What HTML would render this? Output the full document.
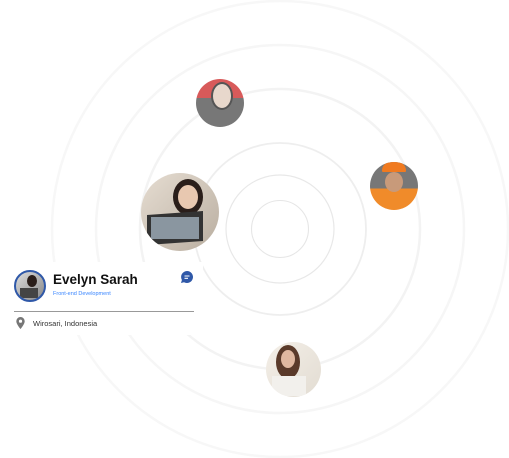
<!DOCTYPE html>
<html><head><style>
body{margin:0;width:509px;height:458px;overflow:hidden;background:#fff;font-family:"Liberation Sans",sans-serif;position:relative}
.av{position:absolute;border-radius:50%;overflow:hidden}
.card{position:absolute;left:0;top:262px;width:203px;height:73px;background:#fff}
</style></head><body>
<svg width="509" height="458" style="position:absolute;left:0;top:0">
<g fill="none">
<circle cx="280" cy="229" r="28.5" stroke="#e6e6e6" stroke-width="1.1"/>
<circle cx="280" cy="229" r="54" stroke="#e8e8e8" stroke-width="1.2"/>
<circle cx="280" cy="229" r="86" stroke="#eeeeee" stroke-width="1.8"/>
<circle cx="280" cy="229" r="140" stroke="#f3f3f3" stroke-width="2.5"/>
<circle cx="280" cy="229" r="184" stroke="#f6f6f6" stroke-width="2.5"/>
<circle cx="280" cy="229" r="228" stroke="#f7f7f7" stroke-width="2.5"/>
</g>
</svg>
<div class="av" style="left:196px;top:79px;width:48px;height:48px;background:linear-gradient(#d85a5a 0 40%,#777 40%)">
<div style="position:absolute;left:15px;top:3px;width:18px;height:24px;border-radius:50%;background:#e8d8cc;border:2px solid #555"></div></div>
<div class="av" style="left:370px;top:162px;width:48px;height:48px;background:linear-gradient(#777 0 55%,#f08b2a 55%)">
<div style="position:absolute;left:12px;top:0;width:24px;height:10px;border-radius:12px 12px 2px 2px;background:#f07a20"></div>
<div style="position:absolute;left:15px;top:10px;width:18px;height:20px;border-radius:50%;background:#c89a7a"></div></div>
<div class="av" style="left:141px;top:173px;width:78px;height:78px;background:linear-gradient(135deg,#e6ddd2,#b9aea0)">
<div style="position:absolute;left:32px;top:6px;width:30px;height:36px;border-radius:50%;background:#2a1e1a"></div>
<div style="position:absolute;left:37px;top:12px;width:20px;height:24px;border-radius:50%;background:#e8c8b0"></div>
<div style="position:absolute;left:6px;top:40px;width:56px;height:30px;background:#333;transform:skewY(-4deg)"></div>
<div style="position:absolute;left:10px;top:44px;width:48px;height:22px;background:#8a96a0"></div></div>
<div class="av" style="left:266px;top:342px;width:55px;height:55px;background:linear-gradient(135deg,#f4efe8,#e2dcd2)">
<div style="position:absolute;left:10px;top:3px;width:24px;height:34px;border-radius:50%;background:#5a3a2a"></div>
<div style="position:absolute;left:15px;top:8px;width:14px;height:18px;border-radius:50%;background:#e0b8a0"></div>
<div style="position:absolute;left:6px;top:34px;width:34px;height:20px;background:#f2f0ec"></div></div>
<div class="card">
<div class="av" style="left:14px;top:8px;width:28px;height:28px;border:2px solid #2f58a8;background:linear-gradient(135deg,#ddd,#888)">
<div style="position:absolute;left:11px;top:3px;width:10px;height:12px;border-radius:50%;background:#2a1e1a"></div>
<div style="position:absolute;left:4px;top:16px;width:18px;height:10px;background:#444"></div></div>
<div style="position:absolute;left:53px;top:10px;font-size:13.5px;font-weight:bold;color:#111">Evelyn Sarah</div>
<div style="position:absolute;left:53px;top:29px;font-size:5.5px;color:#3a86ff">Front-end Development</div>
<svg style="position:absolute;left:180px;top:8px" width="14" height="14" viewBox="0 0 14 14"><path d="M7 1a6 6 0 1 1-3 11.2L1 13l.9-3A6 6 0 0 1 7 1z" fill="#2f58a8"/><path d="M4.5 6h5M4.5 8.3h3.5" stroke="#fff" stroke-width="1.1"/></svg>
<div style="position:absolute;left:14px;top:49px;width:180px;height:1px;background:#999"></div>
<svg style="position:absolute;left:16px;top:55px" width="9" height="12" viewBox="0 0 9 12"><path d="M4.5 0a4.2 4.2 0 0 1 4.2 4.2c0 3-4.2 7.8-4.2 7.8S.3 7.2.3 4.2A4.2 4.2 0 0 1 4.5 0z" fill="#777"/><circle cx="4.5" cy="4.2" r="1.6" fill="#fff"/></svg>
<div style="position:absolute;left:33px;top:57px;font-size:7.5px;color:#333">Wirosari, Indonesia</div>
</div>
</body></html>
